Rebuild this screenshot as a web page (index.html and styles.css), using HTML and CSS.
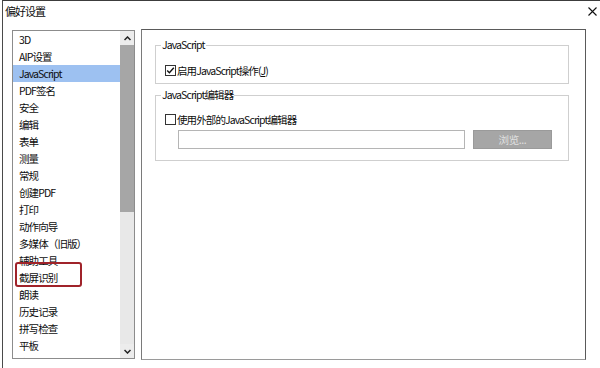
FILE: index.html
```html
<!DOCTYPE html>
<html lang="zh-CN">
<head>
    <meta charset="UTF-8">
    <title>偏好设置</title>
    <link rel="stylesheet" href="styles.css">
</head>
<body>
    <div class="window">
        <div class="titlebar">
            <span class="title">偏好设置</span>
            <svg class="close" width="9" height="9" viewBox="0 0 9 9">
                <path d="M0.5 0.5 L8.5 8.5 M8.5 0.5 L0.5 8.5" stroke="#111" stroke-width="1.1" fill="none"/>
            </svg>
        </div>
        <div class="main">
            <div class="listbox">
                <ul class="items">
                    <li>3D</li>
                    <li>AIP设置</li>
                    <li class="selected">JavaScript</li>
                    <li>PDF签名</li>
                    <li>安全</li>
                    <li>编辑</li>
                    <li>表单</li>
                    <li>测量</li>
                    <li>常规</li>
                    <li>创建PDF</li>
                    <li>打印</li>
                    <li>动作向导</li>
                    <li>多媒体（旧版）</li>
                    <li>辅助工具</li>
                    <li>截屏识别</li>
                    <li>朗读</li>
                    <li>历史记录</li>
                    <li>拼写检查</li>
                    <li>平板</li>
                    <li>全屏</li>
                </ul>
                <div class="scrollbar">
                    <div class="arrow">
                        <svg width="7" height="5" viewBox="0 0 7 5"><path d="M0.5 4 L3.5 1 L6.5 4" stroke="#222" stroke-width="1.5" fill="none"/></svg>
                    </div>
                    <div class="thumb"></div>
                    <div class="track"></div>
                    <div class="arrow">
                        <svg width="7" height="5" viewBox="0 0 7 5"><path d="M0.5 1 L3.5 4 L6.5 1" stroke="#222" stroke-width="1.5" fill="none"/></svg>
                    </div>
                </div>
                <div class="mark"></div>
            </div>

            <div class="panel">
                <fieldset class="group first">
                    <legend>JavaScript</legend>
                    <label class="check-row">
                        <svg class="checkbox" width="11" height="11" viewBox="0 0 11 11">
                            <rect x="0.5" y="0.5" width="10" height="10" fill="#fff" stroke="#333"/>
                            <path d="M2.2 5.6 L4.4 7.8 L8.8 2.8" stroke="#111" stroke-width="1.4" fill="none"/>
                        </svg>
                        <span>启用JavaScript操作(<u>J</u>)</span>
                    </label>
                </fieldset>

                <fieldset class="group second">
                    <legend>JavaScript编辑器</legend>
                    <label class="check-row">
                        <svg class="checkbox" width="11" height="11" viewBox="0 0 11 11">
                            <rect x="0.5" y="0.5" width="10" height="10" fill="#fff" stroke="#333"/>
                        </svg>
                        <span>使用外部的JavaScript编辑器</span>
                    </label>
                    <div class="path-row">
                        <div class="path-input"></div>
                        <div class="browse">浏览...</div>
                    </div>
                </fieldset>
            </div>
        </div>
    </div>
</body>
</html>
```

FILE: styles.css
```css
body {
    margin: 0;
    font-family: "Noto Sans CJK SC", "Liberation Sans", sans-serif;
    font-size: 10.5px;
    color: #0d0d0d;
    background-color: #fff;
    overflow: hidden;
}
.window {
    margin-left: 2px;
    height: 368px;
    box-sizing: border-box;
    border-top: 1px solid #3c3c3c;
    border-left: 1px solid #4a4a4a;
}
.titlebar {
    height: 20px;
    display: flex;
    justify-content: space-between;
    align-items: center;
    padding: 0 3px 0 2px;
}
.title {
    font-size: 11px;
    letter-spacing: -1px;
}
.main {
    display: flex;
    align-items: flex-start;
    gap: 6px;
    padding: 8px 0 0 9px;
}
.listbox {
    position: relative;
    margin-top: 1px;
    width: 123px;
    height: 329px;
    box-sizing: border-box;
    border: 1px solid #8c8c8c;
    display: flex;
}
.items {
    list-style: none;
    margin: 0;
    padding: 0;
    width: 107px;
    overflow: hidden;
}
.items li {
    height: 17px;
    line-height: 17px;
    padding-left: 6px;
    letter-spacing: -0.9px;
    white-space: nowrap;
}
.items li.selected {
    background-color: #9dc1f1;
}
.scrollbar {
    width: 14px;
    display: flex;
    flex-direction: column;
    background-color: #e8e8e8;
}
.arrow {
    height: 14px;
    display: flex;
    align-items: center;
    justify-content: center;
    background-color: #ececec;
}
.thumb {
    height: 167px;
    background-color: #a6a6a6;
}
.track {
    flex: 1;
}
.mark {
    position: absolute;
    left: 2px;
    top: 231px;
    width: 67px;
    height: 25px;
    box-sizing: border-box;
    border: 2px solid #a0232a;
    border-radius: 3px;
}
.panel {
    width: 445px;
    height: 331px;
    box-sizing: border-box;
    border: 1px solid #5a5a5a;
    border-left-color: #7a7a7a;
    border-bottom-color: #9a9a9a;
    padding: 8px 0 0 13px;
}
.group {
    width: 414px;
    box-sizing: border-box;
    margin: 0;
    min-width: 0;
    border: 1px solid #cfcfcf;
    padding: 0 0 0 5px;
}
.group legend {
    padding: 0 1px;
    line-height: 14px;
    letter-spacing: -0.9px;
}
.first {
    padding-bottom: 5px;
}
.first .check-row {
    margin-top: 10px;
}
.second {
    margin-top: 4px;
    padding-bottom: 11px;
}
.second .check-row {
    margin-top: 9px;
}
.check-row {
    display: flex;
    align-items: center;
    gap: 1px;
    height: 16px;
    margin-left: 4px;
    letter-spacing: -0.9px;
}
.checkbox {
    display: block;
}
.path-row {
    display: flex;
    gap: 8px;
    margin: 3px 0 0 17px;
}
.path-input {
    width: 287px;
    height: 19px;
    box-sizing: border-box;
    border: 1px solid #b5b5b5;
}
.browse {
    width: 79px;
    height: 19px;
    box-sizing: border-box;
    border: 1px solid #9a9a9a;
    background-color: #a6a6a6;
    color: #e0e0e0;
    text-align: center;
    line-height: 17px;
    letter-spacing: -0.4px;
}
```
